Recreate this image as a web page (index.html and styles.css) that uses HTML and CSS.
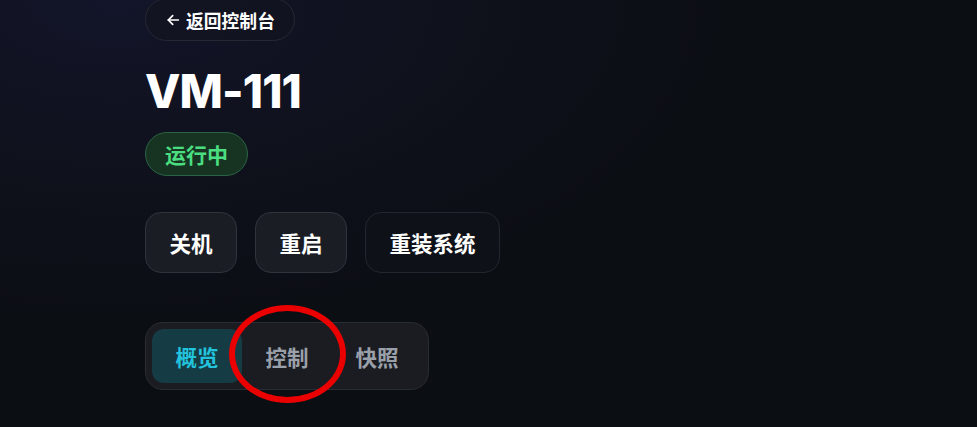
FILE: index.html
```html
<!DOCTYPE html>
<html lang="zh-CN">
<head>
<meta charset="utf-8">
<title>VM-111</title>
<link rel="stylesheet" href="styles.css">
</head>
<body>
<main class="page">
  <a class="back" href="#">
    <svg class="back-icon" viewBox="0 0 24 24" width="16" height="16" fill="none" stroke="currentColor" stroke-width="2.6" stroke-linecap="round" stroke-linejoin="round"><path d="M20 12H5"/><path d="M11.5 18.5L5 12l6.5-6.5"/></svg>
    <span>返回控制台</span>
  </a>
  <h1 class="title">VM-111</h1>
  <div class="status-row"><span class="badge">运行中</span></div>
  <div class="actions">
    <button class="btn">关机</button>
    <button class="btn">重启</button>
    <button class="btn btn-dark">重装系统</button>
  </div>
  <div class="tabs-row">
    <div class="tabs">
      <button class="tab active">概览</button>
      <button class="tab">控制</button>
      <button class="tab">快照</button>
      <span class="annot"></span>
    </div>
  </div>
</main>
</body>
</html>
```

FILE: styles.css
```css
* { box-sizing: border-box; }
html, body { margin: 0; height: 100%; }
body {
  background: radial-gradient(ellipse 75% 90% at 12% 0%, #13152a 0%, #0f111c 45%, #0b0e13 85%), #0b0e13;
  font-family: Inter, "Noto Sans CJK SC", "Noto Sans", sans-serif;
  color: #fff;
  overflow: hidden;
}
.page {
  padding-left: 145px;
  display: flex;
  flex-direction: column;
  align-items: flex-start;
}
.back {
  margin-top: -2px;
  display: inline-flex;
  align-items: center;
  gap: 5px;
  height: 43px;
  padding: 0 19px 0 19px;
  border: 1px solid #262933;
  border-radius: 999px;
  background: rgba(18, 20, 30, 0.6);
  color: #fff;
  text-decoration: none;
  font-size: 17.8px;
  font-weight: 700;
}
.back-icon { display: block; }
.title {
  margin: 21px 0 0 0;
  font-family: Inter, sans-serif;
  font-size: 46px;
  font-weight: 800;
  line-height: 58px;
  letter-spacing: -0.9px;
}
.status-row { margin-top: 12px; }
.badge {
  display: inline-flex;
  align-items: center;
  height: 44px;
  padding: 0 19px;
  border: 1px solid #2b6344;
  border-radius: 999px;
  background: #173423;
  color: #4ade80;
  font-size: 21px;
  font-weight: 700;
}
.actions {
  margin-top: 36px;
  display: flex;
  gap: 18px;
}
.btn {
  height: 61px;
  padding: 0 23.5px;
  border: 1px solid #30333c;
  border-radius: 16px;
  background: #1b1d24;
  color: #fff;
  font-family: inherit;
  font-size: 21.5px;
  font-weight: 700;
}
.btn-dark {
  background: #0f1118;
  border-color: #23262e;
}
.tabs-row { margin-top: 49px; }
.tabs {
  position: relative;
  display: flex;
  padding: 6px;
  border: 1px solid #2a2d35;
  border-radius: 18px;
  background: #1a1c22;
}
.tab {
  width: 90px;
  height: 54px;
  border: 0;
  border-radius: 12px;
  background: transparent;
  color: #9aa0aa;
  font-family: inherit;
  font-size: 21.5px;
  font-weight: 700;
}
.tab.active {
  background: #153b45;
  color: #22c3dc;
}
.annot {
  position: absolute;
  left: 83px;
  top: -18px;
  width: 117px;
  height: 98px;
  border: 6px solid #ea0000;
  border-radius: 50%;
  pointer-events: none;
}
```
